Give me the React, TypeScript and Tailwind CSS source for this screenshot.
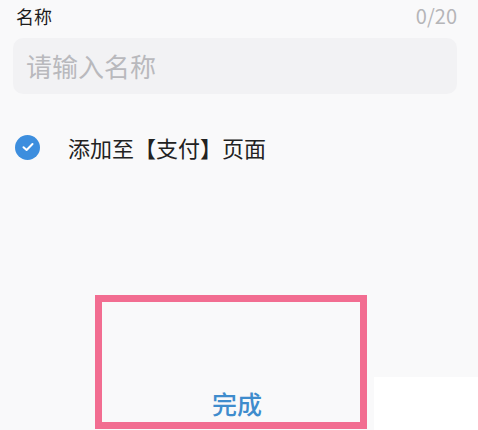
const font = { fontFamily: '"Noto Sans CJK SC", "Noto Sans", sans-serif' };

export default function App() {
  return (
    <div
      className="relative w-[478px] h-[430px] overflow-hidden bg-[#f9f9fa] flex flex-col"
      style={font}
    >
      {/* name label + counter */}
      <div className="flex items-center justify-between pl-[16px] pr-[21px] pt-[3px] h-[28px] shrink-0">
        <span className="text-[18px] leading-[20px] text-[#1c1c1c]">名称</span>
        <span className="text-[20px] leading-[20px] text-[#b5b5b8]">0/20</span>
      </div>

      {/* input */}
      <div className="mt-[10px] ml-[13px] w-[444px] h-[56px] shrink-0 rounded-[10px] bg-[#f2f2f4] flex items-center pl-[13px]">
        <span className="text-[26px] leading-none text-[#b9b9bd]">请输入名称</span>
      </div>

      {/* checkbox row */}
      <div className="mt-[40px] flex items-center h-[26px] shrink-0">
        <div className="ml-[15px] w-[25px] h-[25px] rounded-full bg-[#3d8ede] flex items-center justify-center">
          <svg width="14" height="14" viewBox="0 0 14 14" fill="none">
            <path
              d="M2.5 7.2 L5.6 10 L11.5 4"
              stroke="white"
              strokeWidth="2"
              strokeLinecap="round"
              strokeLinejoin="round"
            />
          </svg>
        </div>
        <span className="ml-[28px] text-[22px] leading-none text-[#222]">添加至【支付】页面</span>
      </div>

      {/* done button, highlighted */}
      <div className="mt-[135px] ml-[95px] w-[272px] h-[134px] shrink-0 box-border border-[7px] border-[#f26d91] flex items-end justify-center pb-[6px] pl-[12px]">
        <span className="text-[25px] leading-none font-medium text-[#3f8ccd]">完成</span>
      </div>

      <div className="absolute right-0 bottom-0 w-[104px] h-[53px] bg-white" />
    </div>
  );
}
